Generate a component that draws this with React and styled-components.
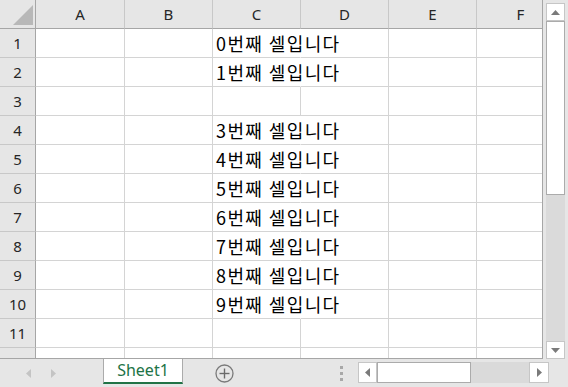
import React from "react";
import styled, { createGlobalStyle } from "styled-components";

const Global = createGlobalStyle`
  html, body { margin: 0; padding: 0; background: #ffffff; }
  body { font-family: "Noto Sans", "Open Sans", sans-serif; }
`;

const Window = styled.div`
  width: 568px;
  height: 387px;
  display: flex;
  flex-direction: column;
  background: #e6e6e6;
  overflow: hidden;
`;

const SheetArea = styled.div`
  display: flex;
  height: 359px;
`;

const Grid = styled.div`
  width: 543px;
  height: 359px;
  box-sizing: border-box;
  border-right: 1px solid #a6a6a6;
  border-bottom: 1px solid #a6a6a6;
  overflow: hidden;
  background: #ffffff;
  display: grid;
  grid-template-columns: 36px 89px repeat(5, 88px);
  grid-auto-rows: 29px;
  align-content: start;
`;

const Corner = styled.div`
  position: relative;
  background: #e6e6e6;
  box-sizing: border-box;
  border-right: 1px solid #a6a6a6;
  border-bottom: 1px solid #a6a6a6;
  svg { position: absolute; left: 0; top: 0; }
`;

const ColHead = styled.div`
  background: #e6e6e6;
  box-sizing: border-box;
  border-right: 1px solid #c8c8c8;
  border-bottom: 1px solid #a6a6a6;
  display: flex;
  align-items: center;
  justify-content: center;
  font-family: "Noto Sans", "Open Sans", sans-serif;
  font-size: 15px;
  color: #262626;
  padding-bottom: 1px;
`;

const RowHead = styled.div`
  background: #e6e6e6;
  box-sizing: border-box;
  border-right: 1px solid #a6a6a6;
  border-bottom: 1px solid #c8c8c8;
  display: flex;
  align-items: center;
  justify-content: center;
  font-family: "Noto Sans", "Open Sans", sans-serif;
  font-size: 15px;
  color: #262626;
`;

const Cell = styled.div`
  box-sizing: border-box;
  border-right: 1px solid ${(p) => (p.$open ? "transparent" : "#d4d4d4")};
  border-bottom: 1px solid #d4d4d4;
  position: relative;
  overflow: visible;
  white-space: nowrap;
  z-index: ${(p) => (p.$open ? 1 : 0)};
`;

const CellText = styled.span`
  position: absolute;
  left: 3px;
  top: 2px;
  font-family: "Noto Sans CJK KR", "Noto Sans", sans-serif;
  font-size: 18px;
  letter-spacing: 1.4px;
  line-height: 24px;
  color: #000000;
`;

const VScroll = styled.div`
  flex: 1;
  display: flex;
  flex-direction: column;
  padding: 3px 0 0 3px;
  box-sizing: border-box;
`;

const ScrollBtn = styled.div`
  width: 19px;
  height: ${(p) => p.$h || 18}px;
  box-sizing: border-box;
  background: #ffffff;
  border: 1px solid #c6c6c6;
  display: flex;
  align-items: center;
  justify-content: center;
  flex-shrink: 0;
`;

const VThumb = styled.div`
  width: 19px;
  height: 174px;
  box-sizing: border-box;
  background: #ffffff;
  border: 1px solid #ababab;
  flex-shrink: 0;
`;

const VTrack = styled.div`
  width: 19px;
  flex: 1;
  background: #dadada;
`;

const TabBar = styled.div`
  height: 28px;
  display: flex;
  align-items: stretch;
  background: #e6e6e6;
`;

const NavArrows = styled.div`
  width: 103px;
  display: flex;
  align-items: center;
  gap: 20px;
  padding-left: 26px;
  box-sizing: border-box;
`;

const Tab = styled.div`
  width: 80px;
  height: 25px;
  box-sizing: border-box;
  background: #ffffff;
  border-left: 1px solid #ababab;
  border-right: 1px solid #ababab;
  border-bottom: 2px solid #217346;
  display: flex;
  align-items: center;
  justify-content: center;
  font-family: "Noto Sans", "Open Sans", sans-serif;
  font-size: 16px;
  color: #217346;
  padding-bottom: 1px;
`;

const AddBtn = styled.div`
  margin-left: 31px;
  width: 20px;
  display: flex;
  align-items: center;
  justify-content: center;
`;

const Dots = styled.div`
  margin-left: 106px;
  width: 3px;
  display: flex;
  flex-direction: column;
  justify-content: center;
  gap: 3px;
  span {
    display: block;
    width: 3px;
    height: 3px;
    background: #a8a8a8;
  }
`;

const HScroll = styled.div`
  margin-left: 15px;
  margin-top: 3px;
  height: 21px;
  display: flex;
`;

const HBtn = styled.div`
  width: ${(p) => p.$w || 19}px;
  height: 21px;
  box-sizing: border-box;
  background: #ffffff;
  border: 1px solid #c6c6c6;
  display: flex;
  align-items: center;
  justify-content: center;
`;

const HThumb = styled.div`
  width: 94px;
  height: 21px;
  box-sizing: border-box;
  background: #ffffff;
  border: 1px solid #ababab;
`;

const HTrack = styled.div`
  width: 58px;
  height: 21px;
  background: #dadada;
`;

const cols = ["A", "B", "C", "D", "E", "F"];
const rowTexts = {
  1: "0번째 셀입니다",
  2: "1번째 셀입니다",
  4: "3번째 셀입니다",
  5: "4번째 셀입니다",
  6: "5번째 셀입니다",
  7: "6번째 셀입니다",
  8: "7번째 셀입니다",
  9: "8번째 셀입니다",
  10: "9번째 셀입니다",
};

const Tri = ({ dir, color = "#707070", w = 5, h = 9 }) => (
  <svg width={w} height={h} viewBox={`0 0 ${w} ${h}`}>
    {dir === "left" && <polygon points={`${w},0 0,${h / 2} ${w},${h}`} fill={color} />}
    {dir === "right" && <polygon points={`0,0 ${w},${h / 2} 0,${h}`} fill={color} />}
    {dir === "up" && <polygon points={`0,${h} ${w / 2},0 ${w},${h}`} fill={color} />}
    {dir === "down" && <polygon points={`0,0 ${w / 2},${h} ${w},0`} fill={color} />}
  </svg>
);

export default function App() {
  const rows = [];
  for (let r = 1; r <= 12; r++) {
    rows.push(<RowHead key={`rh${r}`}>{r}</RowHead>);
    cols.forEach((c) => {
      const txt = c === "C" ? rowTexts[r] : null;
      rows.push(
        <Cell key={`${c}${r}`} $open={!!txt}>
          {txt && <CellText>{txt}</CellText>}
        </Cell>
      );
    });
  }
  return (
    <>
      <Global />
      <Window>
        <SheetArea>
          <Grid>
            <Corner>
              <svg width="36" height="29">
                <polygon points="13,25 33,25 33,5" fill="#b8b8b8" />
              </svg>
            </Corner>
            {cols.map((c) => (
              <ColHead key={c}>{c}</ColHead>
            ))}
            {rows}
          </Grid>
          <VScroll>
            <ScrollBtn>
              <Tri dir="up" w={9} h={5} color="#7a7a7a" />
            </ScrollBtn>
            <VThumb />
            <VTrack />
            <ScrollBtn>
              <Tri dir="down" w={9} h={5} color="#7a7a7a" />
            </ScrollBtn>
          </VScroll>
        </SheetArea>
        <TabBar>
          <NavArrows>
            <Tri dir="left" color="#c4c4c4" />
            <Tri dir="right" color="#c4c4c4" />
          </NavArrows>
          <Tab>Sheet1</Tab>
          <AddBtn>
            <svg width="19" height="19" viewBox="0 0 19 19">
              <circle cx="9.5" cy="9.5" r="8.5" fill="none" stroke="#7a7a7a" strokeWidth="1.3" />
              <line x1="9.5" y1="4.5" x2="9.5" y2="14.5" stroke="#6a6a6a" strokeWidth="1.4" />
              <line x1="4.5" y1="9.5" x2="14.5" y2="9.5" stroke="#6a6a6a" strokeWidth="1.4" />
            </svg>
          </AddBtn>
          <Dots>
            <span />
            <span />
            <span />
          </Dots>
          <HScroll>
            <HBtn>
              <Tri dir="left" w={5} h={9} color="#7a7a7a" />
            </HBtn>
            <HThumb />
            <HTrack />
            <HBtn $w={20}>
              <Tri dir="right" w={5} h={9} color="#7a7a7a" />
            </HBtn>
          </HScroll>
        </TabBar>
      </Window>
    </>
  );
}
